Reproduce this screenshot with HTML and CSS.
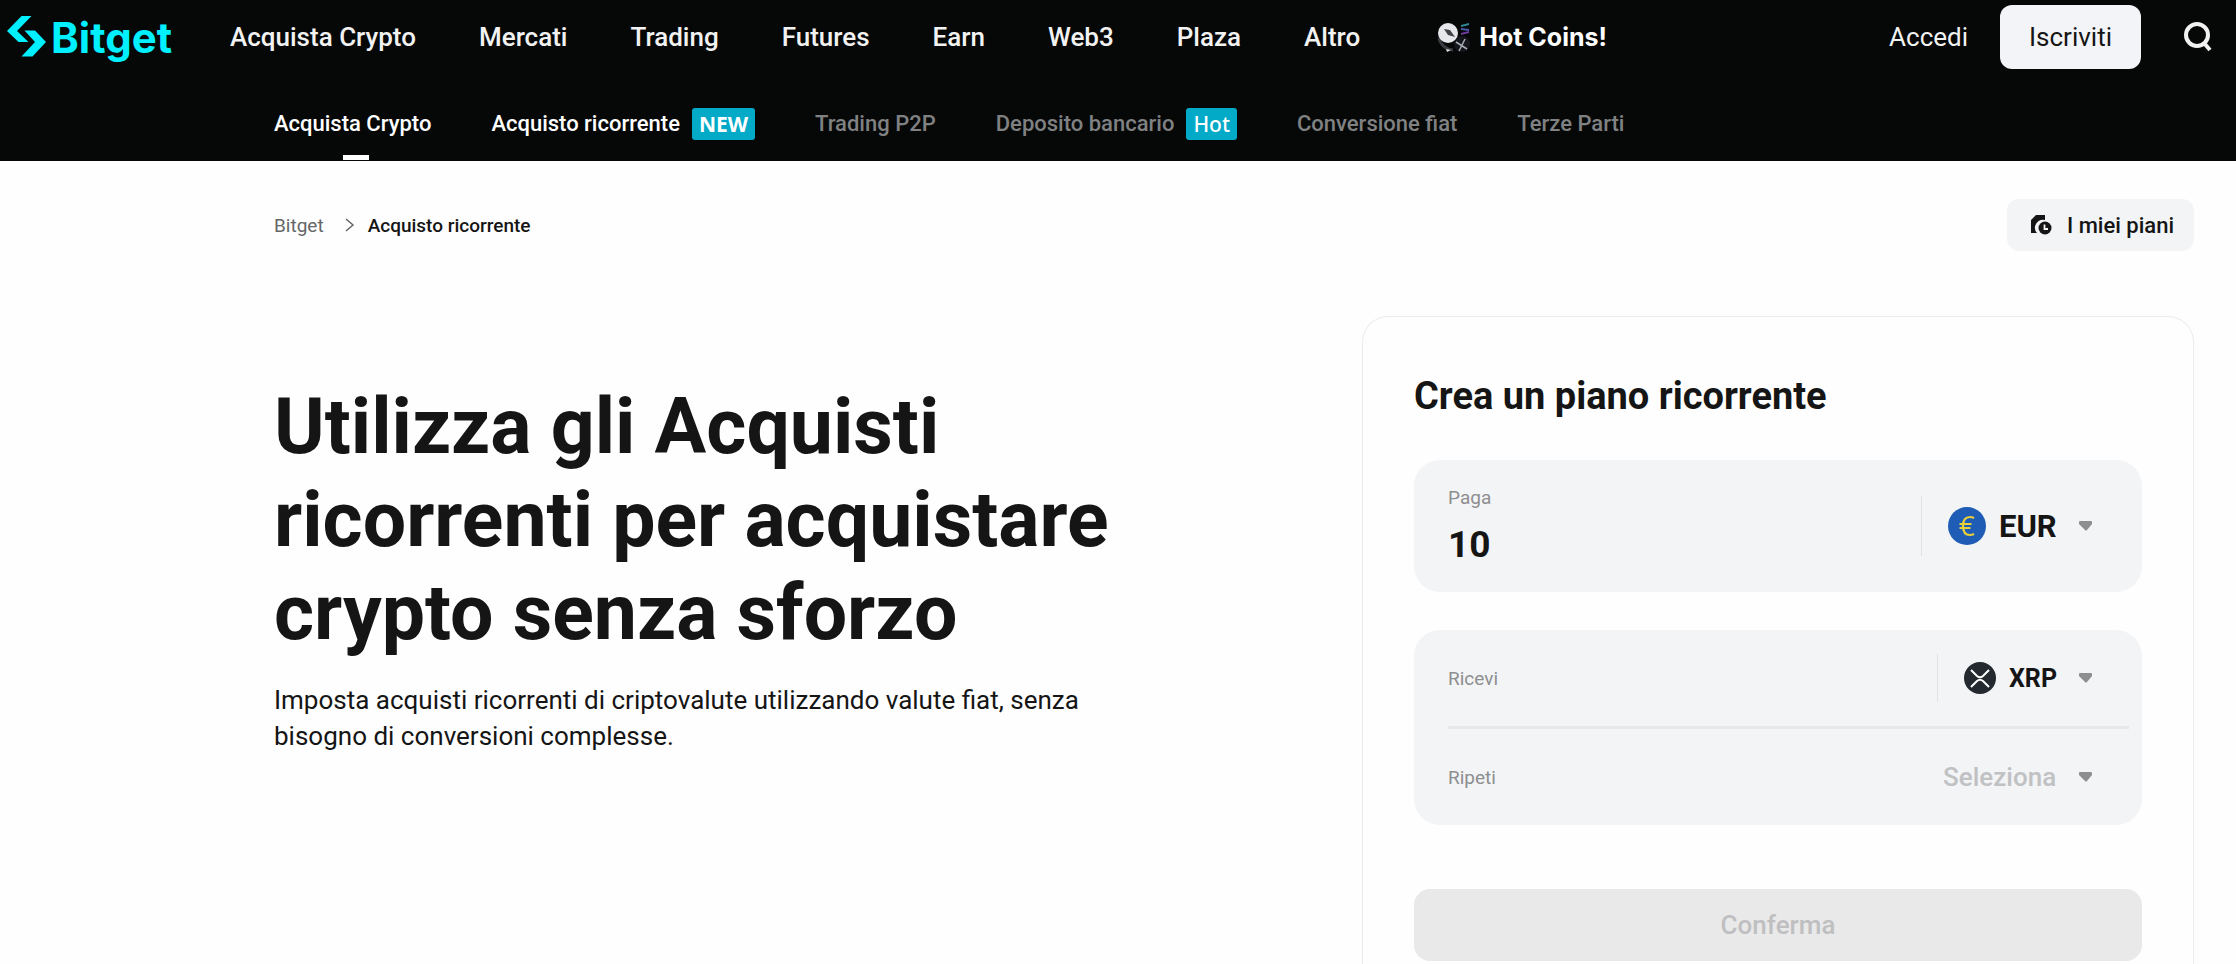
FILE: index.html
```html
<!DOCTYPE html>
<html lang="it">
  <head>
    <meta charset="UTF-8" />
    <meta name="viewport" content="width=device-width, initial-scale=1.0" />
    <title>Acquisto ricorrente - Bitget</title>
    <link rel="stylesheet" href="styles.css">
  </head>
  <body>
    <header>
      <div class="top-bar">
        <a class="logo" href="#">
          <svg width="40" height="42" viewBox="0 0 40 42" fill="currentColor" aria-hidden="true">
            <path d="M14.500 0h10L10 15l11.500 11h-10L0 15z" />
            <path d="M17.500 14.500h10.500L39 26 25.500 40.500H14.500L28 26z" />
          </svg>
          <span>Bitget</span>
        </a>
        <nav class="main-nav">
          <a href="#">Acquista Crypto</a>
          <a href="#">Mercati</a>
          <a href="#">Trading</a>
          <a href="#">Futures</a>
          <a href="#">Earn</a>
          <a href="#">Web3</a>
          <a href="#">Plaza</a>
          <a href="#">Altro</a>
        </nav>
        <a class="hot-coins" href="#">
          <svg width="34" height="34" viewBox="0 0 34 34" aria-hidden="true">
            <path d="M2 18a15 15 0 0 0 14 12" fill="none" stroke="#3a3c42" stroke-width="3" />
            <circle cx="25" cy="24" r="8" fill="#14161b" />
            <path d="M19 22l11 7M28 19l-6 12" stroke="#a9acb4" stroke-width="1.500" />
            <path d="M9 29l5 1-4 2z" fill="#d8dade" />
            <circle cx="11" cy="13" r="10" fill="#e6e7ea" />
            <path d="M7 9l6 1 5 7-7-2z" fill="#3f4147" />
            <path d="M24 5l8-2v2l-8 2z" fill="#2f8896" />
            <path d="M24 8l8 1v2l-8-1z" fill="#4a5bb0" />
            <path d="M24 13l8-2v2l-8 2z" fill="#6f3aa3" />
          </svg>
          <span>Hot Coins!</span>
        </a>
        <div class="account">
          <a href="#">Accedi</a>
          <button class="signup">Iscriviti</button>
          <button class="search" aria-label="Cerca">
            <svg width="28" height="30" viewBox="0 0 28 30" fill="none" stroke="currentColor" stroke-width="4" aria-hidden="true">
              <circle cx="13" cy="13" r="11" />
              <path d="M20 21l6 7" />
            </svg>
          </button>
        </div>
      </div>
      <nav class="sub-nav">
        <a class="current" href="#">Acquista Crypto</a>
        <a class="bright" href="#">Acquisto ricorrente <span class="tag tag-bold">NEW</span></a>
        <a href="#">Trading P2P</a>
        <a href="#">Deposito bancario <span class="tag">Hot</span></a>
        <a href="#">Conversione fiat</a>
        <a href="#">Terze Parti</a>
      </nav>
    </header>

    <main>
      <div class="page-top">
        <nav class="breadcrumb">
          <a href="#">Bitget</a>
          <svg width="10" height="14" viewBox="0 0 10 14" fill="none" stroke="currentColor" aria-hidden="true">
            <path d="M1 1l7 6-7 6" stroke-width="1.500" />
          </svg>
          <span class="here">Acquisto ricorrente</span>
        </nav>
        <button class="plans">
          <svg width="21" height="20" viewBox="0 0 21 20" aria-hidden="true">
            <path d="M5 0h9v5a8 8 0 0 0-8 13H0V5z" fill="#151515" />
            <circle cx="14" cy="13" r="6.500" fill="#151515" />
            <path d="M13.500 9.500v4.500h3.500" fill="none" stroke="#f3f4f6" stroke-width="1.800" />
          </svg>
          I miei piani
        </button>
      </div>

      <div class="content">
        <section class="hero">
          <h1>Utilizza gli Acquisti ricorrenti per acquistare crypto senza sforzo</h1>
          <p>Imposta acquisti ricorrenti di criptovalute utilizzando valute fiat, senza bisogno di conversioni complesse.</p>
        </section>

        <form class="plan-card">
          <h2>Crea un piano ricorrente</h2>

          <div class="box pay">
            <div class="amount">
              <label for="pay">Paga</label>
              <input id="pay" type="text" inputmode="decimal" value="10" />
            </div>
            <div class="picker fiat">
              <svg width="38" height="38" viewBox="0 0 38 38" aria-hidden="true">
                <circle cx="19" cy="19" r="19" fill="#1f5cb5" />
                <path d="M26 11q-2-1-4-1c-5 0-7 4-7 9s2 9 7 9q2 0 4-1M11.500 17h12M11.500 21h11" fill="none" stroke="#e8d038" stroke-width="2.200" />
              </svg>
              <select aria-label="Valuta">
                <option>EUR</option>
              </select>
              <svg class="caret" width="14" height="10" viewBox="0 0 14 10" aria-hidden="true">
                <path d="M1 0h11q1 0 1 1v2L8 9q-1 1-2 0L0 3V1q0-1 1-1z" fill="#8d8e90" />
              </svg>
            </div>
          </div>

          <div class="box">
            <div class="row">
              <label for="coin">Ricevi</label>
              <div class="picker coin">
                <svg width="32" height="32" viewBox="0 0 32 32" aria-hidden="true">
                  <circle cx="16" cy="16" r="16" fill="#23292f" />
                  <path d="M7 8l6 6q3 2.500 6 0l6-6M7 25l6-6q3-2.500 6 0l6 6" fill="none" stroke="#fff" stroke-width="2" />
                </svg>
                <select id="coin">
                  <option>XRP</option>
                </select>
                <svg class="caret" width="14" height="10" viewBox="0 0 14 10" aria-hidden="true">
                  <path d="M1 0h11q1 0 1 1v2L8 9q-1 1-2 0L0 3V1q0-1 1-1z" fill="#8d8e90" />
                </svg>
              </div>
            </div>
            <hr>
            <div class="row">
              <label for="repeat">Ripeti</label>
              <div class="picker repeat">
                <select id="repeat">
                  <option>Seleziona</option>
                </select>
                <svg class="caret" width="14" height="10" viewBox="0 0 14 10" aria-hidden="true">
                  <path d="M1 0h11q1 0 1 1v2L8 9q-1 1-2 0L0 3V1q0-1 1-1z" fill="#8d8e90" />
                </svg>
              </div>
            </div>
          </div>

          <button class="confirm" type="submit" disabled>Conferma</button>
        </form>
      </div>
    </main>
  </body>
</html>
```
FILE: styles.css
```css
* {
  box-sizing: border-box;
}

body,
h1,
h2,
p {
  margin: 0;
}

body {
  font-family: Roboto, "Liberation Sans", sans-serif;
  background-color: #fefefe;
  color: #151515;
}

a {
  color: inherit;
  text-decoration: none;
}

button,
input,
select {
  font-family: inherit;
  color: inherit;
  border: none;
  background: none;
  padding: 0;
  margin: 0;
}

button {
  cursor: pointer;
}

svg {
  display: block;
  flex-shrink: 0;
}

/* Header */
header {
  background-color: #060808;
  color: #f2f2f2;
}

.top-bar {
  display: flex;
  align-items: center;
  height: 74px;
  padding: 0 24px 0 7px;
  font-size: 26px;
  font-weight: 500;
  white-space: nowrap;
}

.logo {
  display: flex;
  align-items: center;
  gap: 4px;
  width: 223px;
  color: #00f0ff;
  font-family: Inter, sans-serif;
  font-size: 42px;
  font-weight: 700;
}

.main-nav {
  display: flex;
  gap: 63px;
}

.hot-coins {
  display: flex;
  align-items: center;
  gap: 8px;
  margin-left: 77px;
  color: #fff;
  font-family: Inter, sans-serif;
  font-size: 25px;
  font-weight: 700;
}

.account {
  display: flex;
  align-items: center;
  margin-left: auto;
  font-weight: 400;
}

.signup {
  height: 64px;
  padding: 0 29px;
  margin: 0 43px 0 32px;
  border-radius: 12px;
  background-color: #f3f4f7;
  color: #151515;
  font-size: 26px;
}

.sub-nav {
  display: flex;
  gap: 60px;
  height: 87px;
  padding: 12px 0 0 274px;
  font-size: 22px;
  font-weight: 500;
  color: #808182;
}

.sub-nav a {
  display: flex;
  align-items: center;
  gap: 12px;
  position: relative;
}

.sub-nav .current,
.sub-nav .bright {
  color: #fff;
}

.sub-nav .current::after {
  content: "";
  position: absolute;
  bottom: 1px;
  left: 50%;
  width: 26px;
  height: 5px;
  margin-left: -10px;
  background-color: #fff;
}

.tag {
  padding: 0 7px;
  border-radius: 3px;
  background-color: #03aac8;
  color: #fff;
  font-family: "Noto Sans", sans-serif;
  font-size: 21px;
  line-height: 32px;
  font-weight: 500;
}

.tag-bold {
  font-weight: 700;
}

/* Page */
main {
  padding: 38px 42px 0 274px;
}

.page-top {
  display: flex;
  justify-content: space-between;
  align-items: center;
}

.breadcrumb {
  display: flex;
  align-items: center;
  font-size: 19px;
  color: #666;
}

.breadcrumb svg {
  margin: 0 13px 0 21px;
}

.breadcrumb .here {
  color: #151515;
  font-weight: 500;
}

.plans {
  display: flex;
  align-items: center;
  gap: 15px;
  height: 52px;
  padding: 0 20px 0 24px;
  border-radius: 12px;
  background-color: #f3f4f6;
  font-size: 22px;
  font-weight: 500;
}

.content {
  display: flex;
  justify-content: space-between;
  gap: 60px;
  padding-top: 65px;
}

.hero {
  flex: 0 1 880px;
  padding-top: 65px;
}

.hero h1 {
  font-size: 77px;
  line-height: 93px;
  font-weight: 700;
}

.hero p {
  margin-top: 22px;
  font-size: 26px;
  line-height: 36px;
}

/* Plan form */
.plan-card {
  flex: 0 1 832px;
  padding: 57px 51px;
  border: 1px solid #ececec;
  border-bottom: none;
  border-radius: 26px 26px 0 0;
}

.plan-card h2 {
  margin-bottom: 42px;
  font-size: 38px;
  line-height: 44px;
  font-weight: 700;
}

.box {
  margin-bottom: 38px;
  padding-left: 34px;
  border-radius: 26px;
  background-color: #f3f4f6;
}

.box label {
  color: #8d8e90;
  font-size: 19px;
}

.pay,
.row {
  display: flex;
  align-items: center;
  justify-content: space-between;
}

.pay {
  height: 132px;
}

.row {
  height: 96px;
}

.amount {
  flex: 1;
}

.amount label {
  display: block;
  line-height: 24px;
}

.amount input {
  width: 100%;
  height: 44px;
  margin-top: 12px;
  font-size: 37px;
  font-weight: 700;
}

.picker {
  display: flex;
  align-items: center;
  padding-right: 49px;
}

.picker select {
  appearance: none;
  margin: 0 22px 0 13px;
  font-size: 26px;
  font-weight: 500;
}

.picker.fiat {
  height: 60px;
  padding-left: 26px;
  border-left: 1px solid #e0e1e3;
}

.picker.fiat select {
  font-size: 31px;
  font-weight: 700;
}

.picker.coin {
  height: 48px;
  padding-left: 26px;
  border-left: 1px solid #e0e1e3;
}

.picker.coin select {
  font-size: 25px;
  font-weight: 700;
}

.picker.repeat select {
  color: #c0c1c3;
}

.box hr {
  height: 3px;
  margin: 0 13px 0 0;
  border: none;
  background-color: #e8e8e9;
}

.confirm {
  width: 100%;
  height: 72px;
  margin-top: 26px;
  border-radius: 16px;
  background-color: #e9e9ea;
  color: #bfbfc1;
  font-size: 26px;
  font-weight: 500;
}
```
